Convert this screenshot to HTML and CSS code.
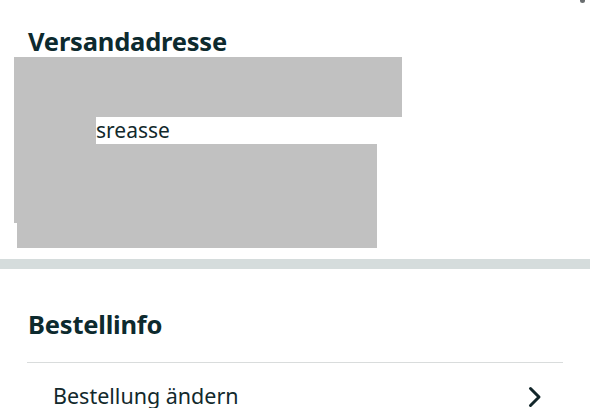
FILE: index.html
```html
<!DOCTYPE html>
<html lang="de">
<head>
<meta charset="utf-8">
<link rel="stylesheet" href="styles.css">
</head>
<body>
<span class="corner-dot"></span>
<section class="address">
  <h2 class="title">Versandadresse</h2>
  <div class="redact redact-top"></div>
  <div class="street-row">
    <div class="redact redact-side"></div>
    <span class="street">sreasse</span>
  </div>
  <div class="redact redact-mid"></div>
  <div class="redact redact-bottom"></div>
</section>
<div class="divider"></div>
<section class="info">
  <h2 class="title">Bestellinfo</h2>
  <div class="rule"></div>
  <div class="link-row">
    <span class="link-text">Bestellung ändern</span>
    <svg class="chev" width="14" height="22" viewBox="0 0 14 22"><path d="M2.5 2.5 L11 11 L2.5 19.5" fill="none" stroke="#12262a" stroke-width="3" stroke-linecap="round" stroke-linejoin="round"/></svg>
  </div>
</section>
</body>
</html>
```
FILE: styles.css
```css
html, body {
  margin: 0;
  padding: 0;
  background: #ffffff;
  width: 590px;
  height: 408px;
  overflow: hidden;
  font-family: "Noto Sans", "Open Sans", sans-serif;
  color: #0f2a2d;
  position: relative;
}
.corner-dot {
  position: absolute;
  top: -2px;
  left: 580px;
  width: 5px;
  height: 5px;
  border-radius: 50%;
  background: #6a6e70;
}
.address {
  padding-top: 26px;
  height: 233px;
}
.title {
  margin: 0 0 0 28px;
  font-size: 25.5px;
  font-weight: 700;
  line-height: 31px;
  letter-spacing: -0.2px;
  color: #0d2a2e;
}
.redact {
  background: #c1c1c1;
}
.redact-top {
  margin-left: 14px;
  width: 388px;
  height: 60px;
}
.street-row {
  display: flex;
  height: 27px;
}
.redact-side {
  margin-left: 14px;
  width: 82px;
  height: 27px;
}
.street {
  font-size: 21px;
  line-height: 27px;
  color: #12292c;
}
.redact-mid {
  margin-left: 14px;
  width: 363px;
  height: 79px;
}
.redact-bottom {
  margin-left: 17px;
  width: 360px;
  height: 25px;
}
.divider {
  height: 10px;
  background: #d5dcdc;
}
.info {
  padding-top: 40px;
}
.rule {
  margin: 22px 27px 0 27px;
  height: 1px;
  background: #d9dcdc;
}
.link-row {
  display: flex;
  align-items: center;
  justify-content: space-between;
  padding: 18px 48px 0 53px;
}
.link-text {
  font-size: 21.5px;
  line-height: 30px;
  color: #12292c;
}
.chev {
  display: block;
  margin-top: 2px;
}
```
